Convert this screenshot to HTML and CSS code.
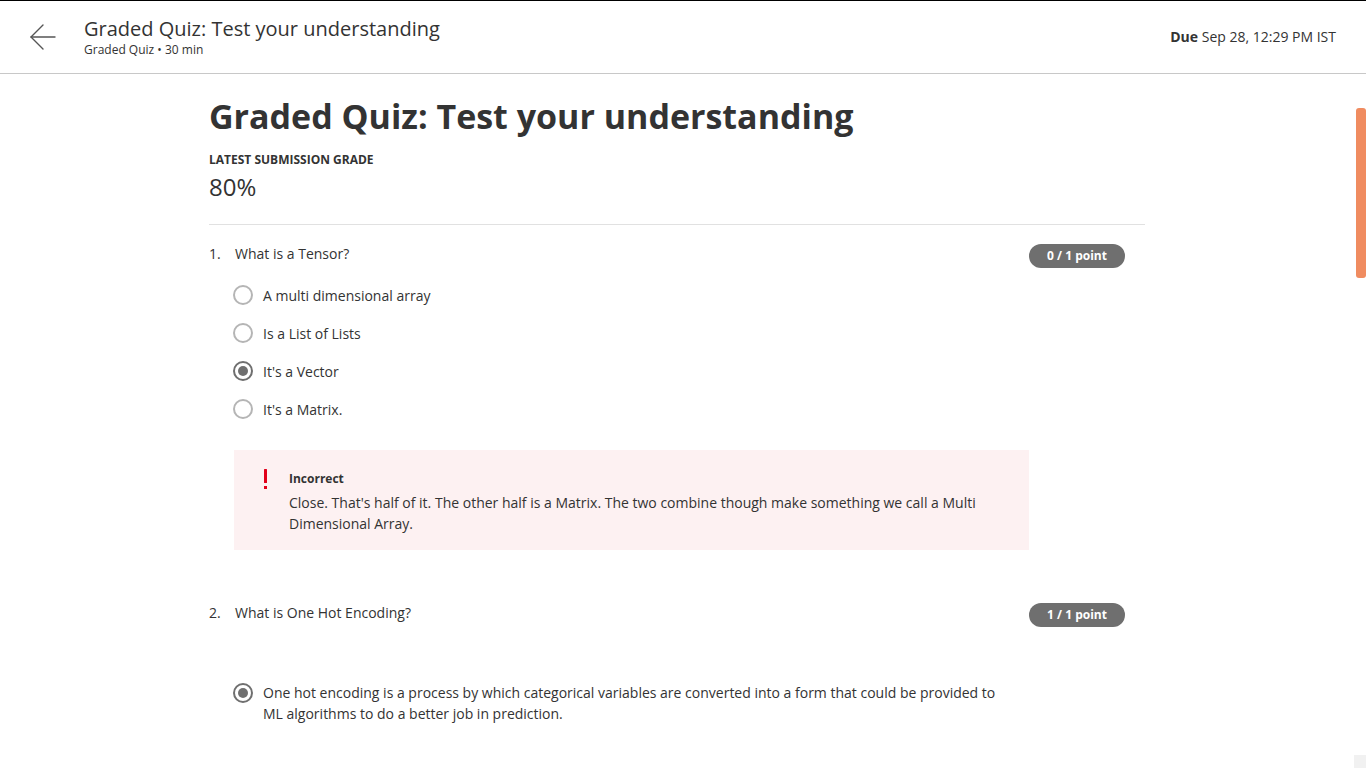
FILE: index.html
```html
<!DOCTYPE html>
<html lang="en">
<head>
<meta charset="utf-8">
<title>Graded Quiz: Test your understanding</title>
<link rel="stylesheet" href="styles.css">
</head>
<body>
<header class="topbar">
  <div class="topbar-left">
    <button class="back" aria-label="Back">
      <svg width="28" height="28" viewBox="0 0 28 28" fill="none" stroke="#555" stroke-width="1.4" stroke-linecap="round" stroke-linejoin="round"><path d="M3 14H27"/><path d="M15 2L3 14L15 26"/></svg>
    </button>
    <div class="titles">
      <div class="top-title">Graded Quiz: Test your understanding</div>
      <div class="top-sub">Graded Quiz • 30 min</div>
    </div>
  </div>
  <div class="due"><b>Due</b> Sep 28, 12:29 PM IST</div>
</header>
<div class="body-row">
  <main class="scroll-area">
    <div class="content">
      <h1 class="page-title">Graded Quiz: Test your understanding</h1>
      <div class="grade-label">LATEST SUBMISSION GRADE</div>
      <div class="grade-value">80%</div>
      <hr class="divider">

      <section class="question">
        <div class="q-head">
          <div class="q-num">1.</div>
          <div class="q-text">What is a Tensor?</div>
          <div class="badge">0 / 1 point</div>
        </div>
        <div class="q-body">
          <div class="option"><span class="radio"></span><span class="opt-text">A multi dimensional array</span></div>
          <div class="option"><span class="radio"></span><span class="opt-text">Is a List of Lists</span></div>
          <div class="option"><span class="radio checked"></span><span class="opt-text">It's a Vector</span></div>
          <div class="option"><span class="radio"></span><span class="opt-text">It's a Matrix.</span></div>
          <div class="feedback">
            <div class="fb-icon">
              <svg width="8" height="22" viewBox="0 0 8 22"><rect x="2" y="0" width="3" height="14" rx="0.5" fill="#e2001a"/><rect x="2" y="17" width="3" height="3" fill="#e2001a"/></svg>
            </div>
            <div class="fb-main">
              <div class="fb-title">Incorrect</div>
              <div class="fb-text">Close. That's half of it. The other half is a Matrix. The two combine though make something we call a Multi Dimensional Array.</div>
            </div>
          </div>
        </div>
      </section>

      <section class="question q2">
        <div class="q-head">
          <div class="q-num">2.</div>
          <div class="q-text">What is One Hot Encoding?</div>
          <div class="badge">1 / 1 point</div>
        </div>
        <div class="q-body spaced">
          <div class="option multi"><span class="radio checked"></span><span class="opt-text">One hot encoding is a process by which categorical variables are converted into a form that could be provided to ML algorithms to do a better job in prediction.</span></div>
        </div>
      </section>
    </div>
  </main>
  <div class="scrollbar">
    <div class="thumb"></div>
    <div class="corner"></div>
  </div>
</div>
</body>
</html>
```
FILE: styles.css
```css
* { box-sizing: border-box; }
html, body { margin: 0; padding: 0; height: 100%; overflow: hidden; }
body {
  font-family: "Open Sans", "Liberation Sans", sans-serif;
  color: #333;
  background: #fff;
  display: flex;
  flex-direction: column;
}
.topbar {
  flex: 0 0 auto;
  height: 74px;
  border-top: 1px solid #000;
  border-bottom: 1px solid #c8c8c8;
  display: flex;
  align-items: center;
  justify-content: space-between;
  padding: 0 30px 0 28px;
}
.topbar-left { display: flex; align-items: center; }
.back {
  border: 0; background: none; padding: 0; margin: 0 28px 0 0;
  width: 28px; height: 28px; display: flex;
}
.titles { display: flex; flex-direction: column; margin-top: 1px; }
.top-title { font-size: 20px; line-height: 24px; color: #333; }
.top-sub { font-size: 12px; line-height: 16px; color: #333; margin-top: 1px; }
.due { font-size: 14px; color: #333; margin-top: -1px; }
.due b { font-weight: 700; }

.body-row { flex: 1 1 auto; display: flex; min-height: 0; }
.scroll-area { flex: 1 1 auto; overflow: hidden; }
.content { width: 936px; margin: 0 auto; padding-top: 19px; }
.page-title {
  margin: 0; font-size: 34px; line-height: 46px; font-weight: 700; color: #333;
}
.grade-label { margin-top: 13px; font-size: 12px; line-height: 16px; font-weight: 700; color: #333; }
.grade-value { margin-top: 3px; font-size: 24px; line-height: 32px; color: #333; }
.divider { margin: 21px 0 0; border: 0; border-top: 1px solid #e1e1e1; height: 0; }

.question { margin-top: 18px; }
.q2 { margin-top: 52px; }
.q-head { display: flex; align-items: flex-start; padding-right: 20px; }
.q-num { width: 26px; font-size: 14px; line-height: 20px; padding-top: 1px; }
.q-text { flex: 1; font-size: 14px; line-height: 20px; padding-top: 1px; }
.badge {
  width: 96px; height: 24px; border-radius: 12px; background: #6f6f6f; color: #fff;
  font-size: 12px; font-weight: 700; line-height: 24px; text-align: center;
  margin-top: 1px;
}
.q-body { margin-left: 25px; width: 795px; padding-top: 8px; }
.q-body.spaced { padding-top: 55px; }
.option { display: flex; align-items: center; height: 38px; }
.option.multi { height: auto; align-items: flex-start; padding-right: 26px; }
.option.multi .radio { margin-top: 1px; }
.radio {
  flex: 0 0 auto;
  width: 20px; height: 20px; border-radius: 50%;
  border: 2px solid #b5b5b5; margin-left: -1px; margin-right: 10px;
  display: flex; align-items: center; justify-content: center;
}
.radio.checked { border-color: #6f6f6f; }
.radio.checked::after {
  content: ""; width: 10px; height: 10px; border-radius: 50%; background: #6f6f6f;
}
.opt-text { font-size: 14px; line-height: 21px; color: #333; }

.feedback {
  margin-top: 22px; background: #fdf1f2; min-height: 100px;
  display: flex; padding: 18px 40px 16px 28px;
}
.fb-icon { width: 27px; padding-top: 1px; }
.fb-icon svg { display: block; }
.fb-main { flex: 1; }
.fb-title { font-size: 12px; font-weight: 700; line-height: 16px; margin-top: 3px; }
.fb-text { font-size: 14px; line-height: 21px; margin-top: 5px; }

.scrollbar {
  flex: 0 0 12px; width: 12px; display: flex; flex-direction: column; align-items: flex-end;
}
.thumb {
  width: 10px; height: 170px; margin-top: 34px; background: #f08c60; border-radius: 3px;
}
.corner {
  margin-top: auto; width: 12px; height: 13px; background: #f1f1f1;
}
```
